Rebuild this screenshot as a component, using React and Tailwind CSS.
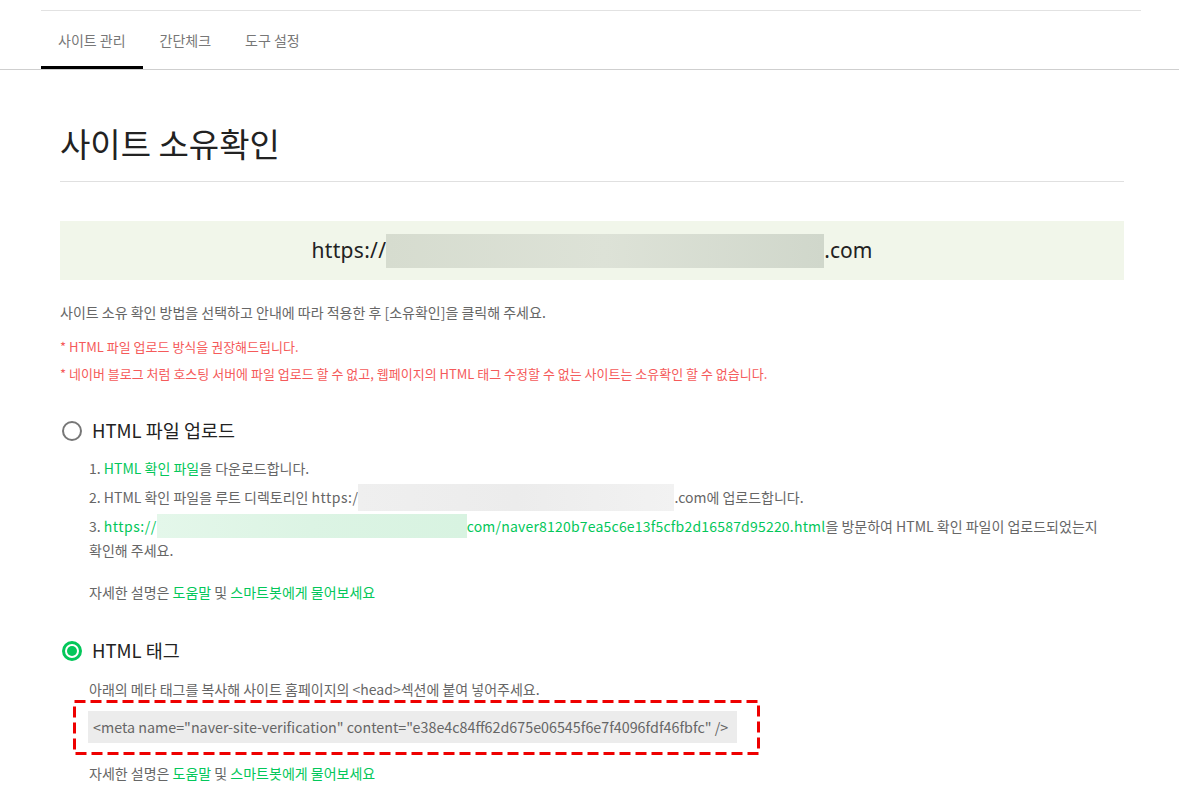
import React from 'react';

const tabs = ['사이트 관리', '간단체크', '도구 설정'];

const Radio = ({ checked }) => (
  checked ? (
    <span className="flex items-center justify-center w-[20px] h-[20px] rounded-full border-[3px] border-[#03c75a]">
      <span className="block w-[10px] h-[10px] rounded-full bg-[#03c75a]" />
    </span>
  ) : (
    <span className="block w-[20px] h-[20px] rounded-full border-2 border-[#777]" />
  )
);

const HelpLine = ({ className }) => (
  <p className={`ml-[29px] text-[14px] leading-[20px] text-[#666] ${className}`}>
    자세한 설명은 <span className="text-[#03c75a]">도움말</span> 및 <span className="text-[#03c75a]">스마트봇에게 물어보세요</span>
  </p>
);

const App = () => {
  return (
    <div className="min-h-[807px] bg-white font-['Noto_Sans_CJK_KR','Noto_Sans',sans-serif] overflow-hidden">
      {/* tabs */}
      <div className="border-b border-[#cfcfcf]">
        <div className="ml-[41px] w-[1100px] mt-[10px] border-t border-[#e2e2e2] flex">
          {tabs.map((t, i) => (
            <div
              key={t}
              className={`h-[58px] px-[17px] flex items-center text-[14px] text-[#777] ${i === 0 ? 'border-b-[3px] border-black pt-[3px]' : ''}`}
            >
              {t}
            </div>
          ))}
        </div>
      </div>

      <div className="ml-[60px] w-[1064px]">
        <div className="mt-[53px] pb-[18px] border-b border-[#e0e0e0]">
          <h1 className="text-[33px] leading-[40px] text-[#222]">사이트 소유확인</h1>
        </div>

        <div className="mt-[39px] h-[59px] bg-[#f1f6ea] flex items-center justify-center text-[21px] text-[#222] font-['Noto_Sans','Noto_Sans_CJK_KR',sans-serif]">
          <span className="tracking-[0.3px]">https://</span>
          <span className="block w-[438px] h-[34px] bg-linear-to-r from-[#d6dccf] via-[#dde2d7] to-[#d0d7cb]" />
          <span>.com</span>
        </div>

        <p className="mt-[22px] text-[14px] leading-[20px] text-[#666]">
          사이트 소유 확인 방법을 선택하고 안내에 따라 적용한 후 [소유확인]을 클릭해 주세요.
        </p>
        <p className="mt-[16px] text-[13px] leading-[18px] text-[#f55a5a]">* HTML 파일 업로드 방식을 권장해드립니다.</p>
        <p className="mt-[9px] text-[13px] leading-[18px] text-[#f55a5a]">
          * 네이버 블로그 처럼 호스팅 서버에 파일 업로드 할 수 없고, 웹페이지의 HTML 태그 수정할 수 없는 사이트는 소유확인 할 수 없습니다.
        </p>

        {/* HTML file upload */}
        <div className="mt-[36px] h-[24px] flex items-center">
          <span className="ml-[2px]"><Radio /></span>
          <span className="ml-[10px] text-[18.5px] text-[#222]">HTML 파일 업로드</span>
        </div>
        <ol className="ml-[29px] mt-[13px] text-[14px] leading-[24px] text-[#666] flex flex-col gap-[5px]">
          <li>1. <span className="text-[#03c75a]">HTML 확인 파일</span>을 다운로드합니다.</li>
          <li>
            2. HTML 확인 파일을 루트 디렉토리인 <span className="tracking-[0.5px]">https:/</span>
            <span className="relative top-[-1px] inline-block align-top w-[316px] h-[27px] -mb-[3px] bg-linear-to-r from-[#efefef] via-[#ececec] to-[#f2f2f2]" />
            .com에 업로드합니다.
          </li>
          <li>
            3. <span className="text-[#03c75a] tracking-[0.5px]">https://</span>
            <span className="inline-block align-top w-[310px] h-[24px] bg-linear-to-r from-[#e4f7ea] via-[#dcf4e4] to-[#d8f3e1]" />
            <span className="text-[#03c75a] tracking-[0.2px]">com/naver8120b7ea5c6e13f5cfb2d16587d95220.html</span>
            을 방문하여 HTML 확인 파일이 업로드되었는지
            <br />
            확인해 주세요.
          </li>
        </ol>
        <HelpLine className="mt-[20px]" />

        {/* HTML tag */}
        <div className="mt-[37px] h-[24px] flex items-center">
          <span className="ml-[2px]"><Radio checked /></span>
          <span className="ml-[10px] text-[18.5px] text-[#222]">HTML 태그</span>
        </div>
        <p className="ml-[29px] mt-[16px] text-[14px] leading-[20px] text-[#666]">
          아래의 메타 태그를 복사해 사이트 홈페이지의 &lt;head&gt;섹션에 붙여 넣어주세요.
        </p>
        <div className="relative ml-[13px] mt-[1px] w-[687px] h-[55px] pl-[15px] pt-[11px]">
          <div className="w-[649px] h-[32px] bg-[#ececec] pl-[5px] flex items-center text-[14.3px] text-[#666] whitespace-nowrap">
            &lt;meta name="naver-site-verification" content="e38e4c84ff62d675e06545f6e7f4096fdf46fbfc" /&gt;
          </div>
          <svg className="absolute inset-0" width="687" height="55" viewBox="0 0 687 55">
            <rect x="1.5" y="1.5" width="684" height="52" fill="none" stroke="#ee0000" strokeWidth="3" strokeDasharray="11 5" />
          </svg>
        </div>
        <HelpLine className="mt-[8px]" />
      </div>
    </div>
  );
};

export default App;
